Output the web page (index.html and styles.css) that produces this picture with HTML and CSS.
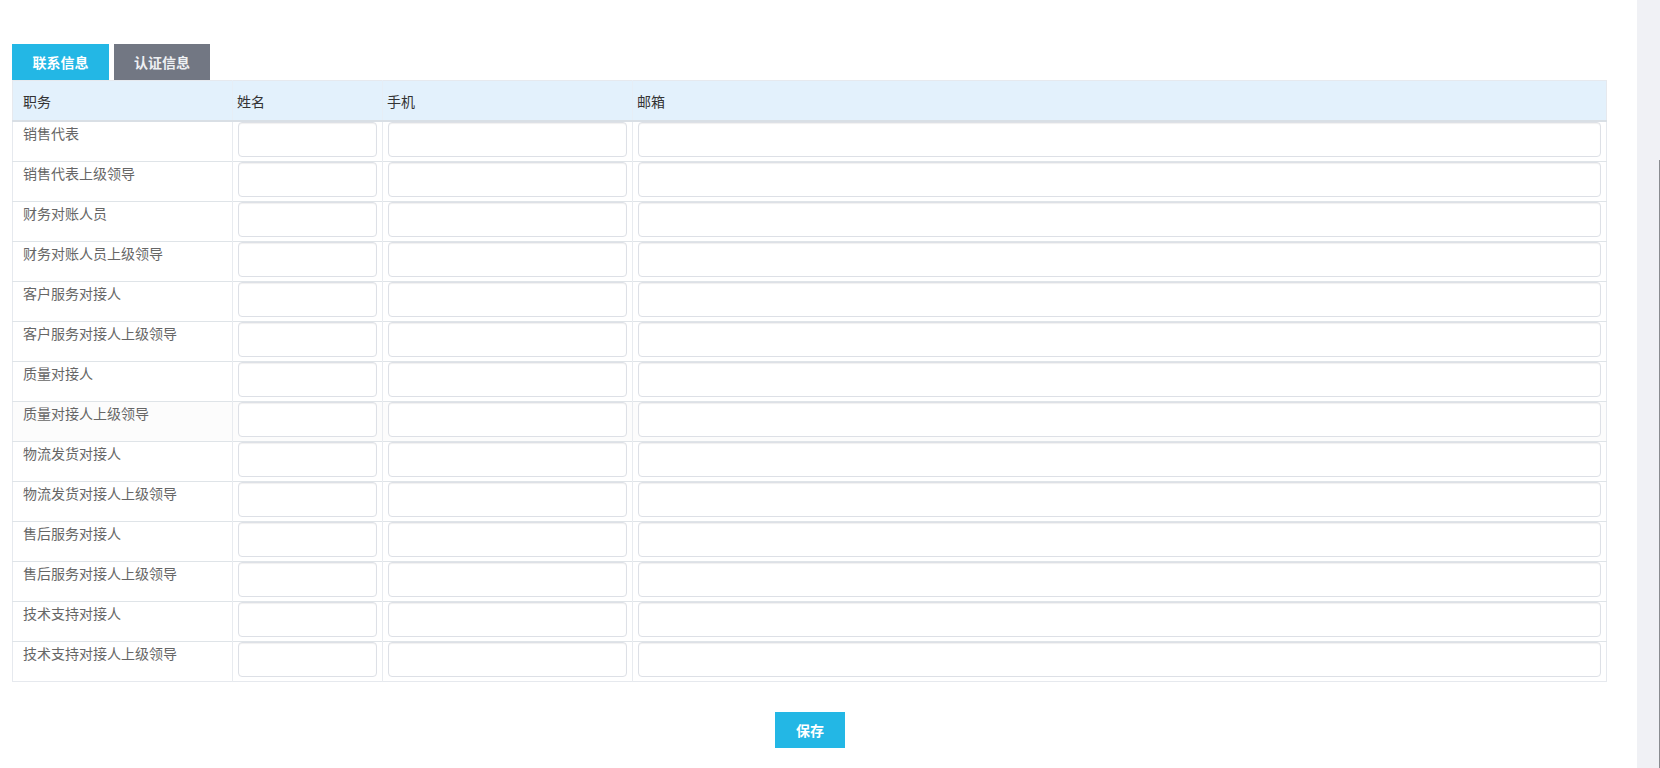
FILE: index.html
```html
<!DOCTYPE html>
<html lang="zh-CN">
<head>
<meta charset="utf-8">
<title>联系信息</title>
<link rel="stylesheet" href="styles.css">
</head>
<body>
<div class="page">
  <main class="main">
    <div class="tabs">
      <div class="tab tab-active">联系信息</div>
      <div class="tab tab-idle">认证信息</div>
    </div>
    <table class="grid">
      <colgroup>
        <col class="c1"><col class="c2"><col class="c3"><col class="c4">
      </colgroup>
      <thead>
        <tr><th>职务</th><th>姓名</th><th>手机</th><th>邮箱</th></tr>
      </thead>
      <tbody>
        <tr><td class="role">销售代表</td><td><input class="inp"></td><td><input class="inp"></td><td><input class="inp"></td></tr>
        <tr><td class="role">销售代表上级领导</td><td><input class="inp"></td><td><input class="inp"></td><td><input class="inp"></td></tr>
        <tr><td class="role">财务对账人员</td><td><input class="inp"></td><td><input class="inp"></td><td><input class="inp"></td></tr>
        <tr><td class="role">财务对账人员上级领导</td><td><input class="inp"></td><td><input class="inp"></td><td><input class="inp"></td></tr>
        <tr><td class="role">客户服务对接人</td><td><input class="inp"></td><td><input class="inp"></td><td><input class="inp"></td></tr>
        <tr><td class="role">客户服务对接人上级领导</td><td><input class="inp"></td><td><input class="inp"></td><td><input class="inp"></td></tr>
        <tr><td class="role">质量对接人</td><td><input class="inp"></td><td><input class="inp"></td><td><input class="inp"></td></tr>
        <tr class="hover"><td class="role">质量对接人上级领导</td><td><input class="inp"></td><td><input class="inp"></td><td><input class="inp"></td></tr>
        <tr><td class="role">物流发货对接人</td><td><input class="inp"></td><td><input class="inp"></td><td><input class="inp"></td></tr>
        <tr><td class="role">物流发货对接人上级领导</td><td><input class="inp"></td><td><input class="inp"></td><td><input class="inp"></td></tr>
        <tr><td class="role">售后服务对接人</td><td><input class="inp"></td><td><input class="inp"></td><td><input class="inp"></td></tr>
        <tr><td class="role">售后服务对接人上级领导</td><td><input class="inp"></td><td><input class="inp"></td><td><input class="inp"></td></tr>
        <tr><td class="role">技术支持对接人</td><td><input class="inp"></td><td><input class="inp"></td><td><input class="inp"></td></tr>
        <tr><td class="role">技术支持对接人上级领导</td><td><input class="inp"></td><td><input class="inp"></td><td><input class="inp"></td></tr>
      </tbody>
    </table>
    <div class="actions">
      <button class="save" type="button">保存</button>
    </div>
  </main>
  <aside class="side"><div class="side-track"></div></aside>
</div>
</body>
</html>
```

FILE: styles.css
```css
html, body {
  margin: 0;
  padding: 0;
  height: 768px;
  overflow: hidden;
  background: #fff;
  font-family: "Noto Sans CJK SC", "Noto Sans", "Liberation Sans", sans-serif;
  font-size: 14px;
  color: #666;
}

.page {
  display: flex;
  height: 768px;
}

.main {
  flex: 1;
  padding: 44px 30px 0 12px;
  box-sizing: border-box;
}

.tabs {
  display: flex;
  gap: 5px;
}

.tab {
  height: 36px;
  line-height: 36px;
  text-align: center;
  font-size: 14px;
  font-weight: bold;
}

.tab-active {
  width: 97px;
  background: #23b7e5;
  color: #fff;
}

.tab-idle {
  width: 96px;
  background: #727783;
  color: #eef0f3;
}

.grid {
  width: 1595px;
  border-collapse: collapse;
  table-layout: fixed;
  border: 1px solid #e6e9ee;
}

.c1 { width: 220px; }
.c2 { width: 150px; }
.c3 { width: 250px; }
.c4 { width: auto; }

.grid th {
  height: 40px;
  background: #e3f1fc;
  border-bottom: 2px solid #d9dfe5;
  border-left: 1px solid #e6eef6;
  text-align: left;
  font-weight: normal;
  color: #333;
  padding: 2px 5px 0 4px;
  box-sizing: border-box;
}

.grid th:first-child {
  border-left: none;
  padding-left: 10px;
}

.grid td {
  height: 40px;
  padding: 0 5px 3px 5px;
  border-top: 1px solid #dfe4e8;
  border-left: 1px solid #e8ebef;
  vertical-align: top;
  box-sizing: border-box;
}

.grid tbody tr:first-child td {
  border-top: none;
  height: 41px;
}

.grid td:first-child { border-left: none; }

.grid td.role {
  padding: 1px 10px 0 10px;
  line-height: 20px;
  color: #666;
}

.grid tr.hover td { background: #fcfcfc; }

.inp {
  display: block;
  width: 100%;
  height: 35px;
  box-sizing: border-box;
  margin: 0;
  border: 1px solid #dde0e6;
  border-radius: 4px;
  box-shadow: inset 0 1px 1px rgba(0, 0, 0, 0.06);
  background: #fff;
  outline: none;
  font-family: inherit;
  font-size: 14px;
  padding: 0 8px;
}

.actions {
  width: 1595px;
  display: flex;
  justify-content: center;
  margin-top: 30px;
}

.save {
  width: 70px;
  height: 36px;
  border: none;
  background: #23b7e5;
  color: #fff;
  font-family: inherit;
  font-size: 14px;
  font-weight: bold;
  padding: 0;
  margin-left: 1px;
}

.side {
  width: 23px;
  background: #f0f1f5;
  display: flex;
  flex-direction: column;
  padding-top: 160px;
  box-sizing: border-box;
}

.side-track {
  flex: 1;
  border-right: 1px solid #8a8c90;
}
```
